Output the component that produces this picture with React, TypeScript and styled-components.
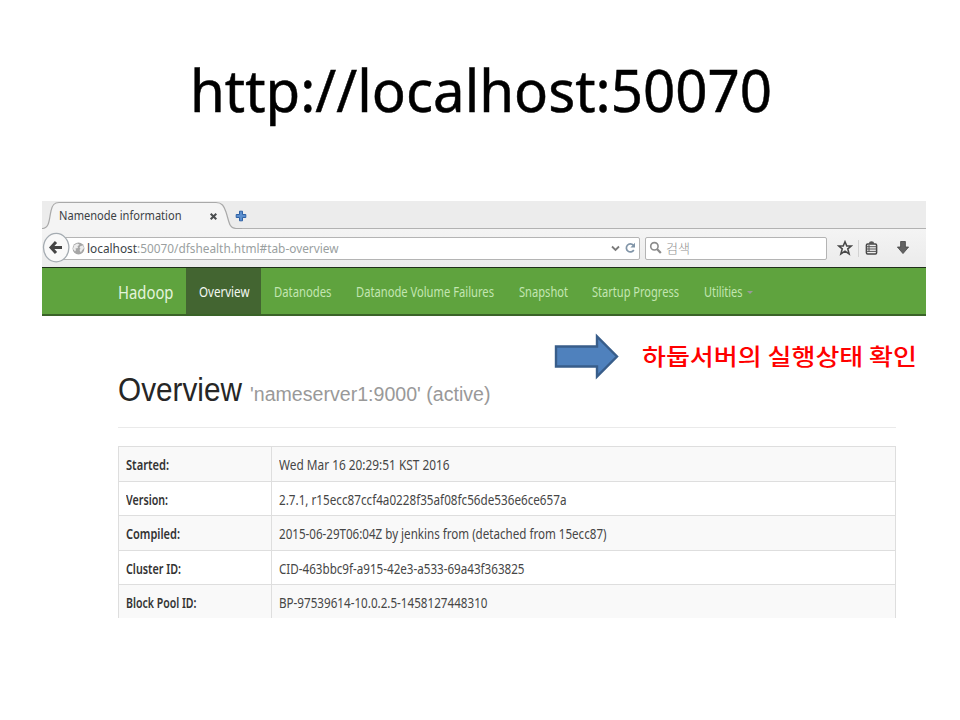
import React, { useLayoutEffect, useRef, useState } from "react";
import styled, { createGlobalStyle } from "styled-components";

const GlobalStyle = createGlobalStyle`
  * { box-sizing: border-box; }
  body { margin: 0; background: #fff; overflow: hidden; }
`;

const humanist = `"Noto Sans", "Open Sans", "Noto Sans CJK KR", sans-serif`;

/* Text condensed or widened to an exact width */
const FitBox = styled.span<{ $w: number }>`
  display: block;
  flex: none;
  width: ${(p) => p.$w}px;
  white-space: nowrap;
`;
const FitInner = styled.span`
  display: inline-block;
  white-space: pre;
  transform-origin: 0 50%;
`;
function Fit({ w, children }: { w: number; children: React.ReactNode }) {
  const ref = useRef<HTMLSpanElement>(null);
  const [scale, setScale] = useState(1);
  useLayoutEffect(() => {
    if (ref.current) {
      const natural = ref.current.getBoundingClientRect().width / scale;
      if (natural > 0) setScale(w / natural);
    }
  }, [w]);
  return (
    <FitBox $w={w}>
      <FitInner ref={ref} style={{ transform: `scaleX(${scale})` }}>
        {children}
      </FitInner>
    </FitBox>
  );
}

const Slide = styled.main`
  position: relative;
  width: 960px;
  height: 720px;
  overflow: hidden;
  background: #fff;
  font-family: ${humanist};
`;
const Title = styled.h1`
  display: flex;
  margin: 0;
  height: 201px;
  padding: 48px 0 0 190px;
  font-size: 59px;
  font-weight: 400;
  line-height: 82px;
  color: #000;
  -webkit-text-stroke: 0.5px #000;
`;
const Browser = styled.section`
  width: 884px;
  height: 417px;
  margin-left: 42px;
  overflow: hidden;
  background: #fff;
`;
const TabStrip = styled.div`
  display: flex;
  position: relative;
  height: 28px;
  background: #ececec;
  border-bottom: 1px solid #b2b2b2;
`;
const TabShape = styled.svg`
  position: absolute;
  left: 0;
  top: 0;
`;
const Tab = styled.div`
  display: flex;
  position: relative;
  align-items: center;
  justify-content: space-between;
  width: 159px;
  height: 29px;
  margin-left: 17px;
  padding-top: 1px;
  font-size: 12.3px;
  line-height: 28px;
  color: #3c4144;
`;
const NewTab = styled.div`
  display: flex;
  position: relative;
  align-items: center;
  height: 29px;
  margin-left: 17px;
`;
const Toolbar = styled.div`
  display: flex;
  align-items: center;
  position: relative;
  height: 38px;
  background: linear-gradient(#f4f4f4, #ebebeb);
`;
const BackSvg = styled.svg`
  position: absolute;
  left: 0;
  top: 3px;
`;
const Field = styled.div<{ $w: number; $ml: number; $pl: number }>`
  display: flex;
  flex: none;
  align-items: center;
  width: ${(p) => p.$w}px;
  height: 23px;
  margin-left: ${(p) => p.$ml}px;
  padding-left: ${(p) => p.$pl}px;
  padding-right: 3px;
  background: #fff;
  border: 1px solid #b4b4b4;
  border-radius: 2px;
  font-size: 12.3px;
  color: #9a9f9f;
`;
const Host = styled.span`
  color: #3c4347;
`;
const Address = styled.div`
  flex: 1;
  margin-left: 2px;
  padding-top: 1px;
`;
const FieldIcons = styled.div`
  display: flex;
  align-items: center;
  gap: 5px;
`;
const Hint = styled.div`
  margin-left: 4px;
  font-family: "Noto Sans CJK KR", sans-serif;
  font-weight: 300;
  font-size: 13px;
  line-height: 20px;
  color: #8f8f8f;
`;
const Tools = styled.div`
  display: flex;
  align-items: center;
  margin-left: 10px;
`;
const Separator = styled.i`
  width: 1px;
  height: 17px;
  margin: 0 6px 0 5px;
  background: #d2d2d2;
`;
const Navbar = styled.nav`
  display: flex;
  height: 49px;
  padding-left: 76px;
  background: #5fa33e;
  border-top: 1px solid #1f2f1a;
  border-bottom: 2px solid #3a6328;
  line-height: 48px;
`;
const Brand = styled.div`
  display: flex;
  width: 68px;
  font-size: 17.5px;
  color: #e4f3dc;
`;
const NavItem = styled.a<{ $active?: boolean }>`
  display: flex;
  align-items: center;
  padding: 2px 11.8px 0 12.8px;
  font-size: 13.7px;
  background: ${(p) => (p.$active ? "#436531" : "transparent")};
  color: ${(p) => (p.$active ? "#f4f8f2" : "#c3e6b2")};
`;
const Caret = styled.i`
  margin-left: 5px;
  border: 3px solid transparent;
  border-top-color: #999;
  border-bottom: 0;
`;
const Content = styled.div`
  width: 778px;
  margin-left: 76px;
`;
const PageHeader = styled.header`
  display: flex;
  align-items: baseline;
  height: 112px;
  padding-top: 54px;
  border-bottom: 1px solid #eaeaea;
  font-family: "Liberation Sans", Arial, sans-serif;
  line-height: 40px;
`;
const Heading = styled.div`
  font-size: 33.5px;
  color: #262626;
`;
const SubHeading = styled.div`
  margin-left: 8px;
  font-size: 20px;
  color: #999;
`;
const Table = styled.div`
  margin-top: 18.4px;
  border: 1px solid #dedede;
  border-bottom: 0;
  border-top: 0;
`;
const Row = styled.div<{ $odd: boolean }>`
  display: grid;
  grid-template-columns: 153px 1fr;
  height: 34.5px;
  border-top: 1px solid #dedede;
  background: ${(p) => (p.$odd ? "#f9f9f9" : "#fff")};
  font-size: 14px;
  line-height: 35px;
`;
const Label = styled.div`
  padding-left: 6.7px;
  border-right: 1px solid #dedede;
  font-weight: 600;
  color: #333;
`;
const Value = styled.div`
  padding-left: 6.5px;
  color: #464646;
`;
const Callout = styled.aside`
  position: absolute;
  left: 554px;
  top: 333px;
  display: flex;
  align-items: center;
  height: 47px;
  font-family: "Noto Sans CJK KR", sans-serif;
  font-size: 23px;
  font-weight: 500;
  line-height: 45px;
  color: #f00;
`;
const CalloutText = styled.div`
  margin-left: 23px;
  margin-top: -2px;
`;

const links = [
  { text: "Overview", w: 50.5, active: true },
  { text: "Datanodes", w: 57.5 },
  { text: "Datanode Volume Failures", w: 138 },
  { text: "Snapshot", w: 49 },
  { text: "Startup Progress", w: 87 },
  { text: "Utilities", w: 38.5, menu: true },
];

const rows: [string, number, string, number][] = [
  ["Started:", 43, "Wed Mar 16 20:29:51 KST 2016", 170.5],
  ["Version:", 42, "2.7.1, r15ecc87ccf4a0228f35af08fc56de536e6ce657a", 287.5],
  ["Compiled:", 54, "2015-06-29T06:04Z by jenkins from (detached from 15ecc87)", 327.5],
  ["Cluster ID:", 55, "CID-463bbc9f-a915-42e3-a533-69a43f363825", 245.5],
  ["Block Pool ID:", 70.5, "BP-97539614-10.0.2.5-1458127448310", 208.5],
];

export default function App() {
  return (
    <Slide>
      <GlobalStyle />
      <Title>
        <Fit w={582}>http://localhost:50070</Fit>
      </Title>
      <Browser>
        <TabStrip>
          <TabShape width="200" height="29" viewBox="0 0 200 29">
            <path d="M0 28C8 27 7 18 9 10C10 4 12 1.5 17 1.5H174C180 1.5 182 5 184 11C187 20 187 27.5 194 27.5V29H0Z" fill="#f4f4f4" />
            <path d="M0 27.5C8 27 7 18 9 10C10 4 12 1.5 17 1.5H174C180 1.5 182 5 184 11C187 20 187 27.5 194 27.5H200" fill="none" stroke="#a9a9a9" strokeWidth="1.2" />
          </TabShape>
          <Tab>
            <Fit w={122.5}>Namenode information</Fit>
            <svg width="9" height="9" viewBox="0 0 9 9">
              <path d="M1.7 1.7L7.3 7.3M7.3 1.7L1.7 7.3" stroke="#4a4d4f" strokeWidth="2" />
            </svg>
          </Tab>
          <NewTab>
            <svg width="12" height="12" viewBox="0 0 12 12">
              <path d="M4.5 1.2H7.5V4.5H10.8V7.5H7.5V10.8H4.5V7.5H1.2V4.5H4.5Z" fill="#5c8fce" stroke="#2f62a5" strokeWidth="1" strokeLinejoin="round" />
            </svg>
          </NewTab>
        </TabStrip>
        <Toolbar>
          <Field $w={586} $ml={12} $pl={17}>
            <svg width="13" height="13" viewBox="0 0 13 13">
              <circle cx="6.5" cy="6.5" r="5.9" fill="#a6a6a6" />
              <path d="M2 3.5L5 1.5L7.5 2.5L5.5 4.5L6 6L3.5 6.5L4 8L3 9.5L1 7ZM8.5 4L11 3.6L12 6L10 8.5L8.8 10.5L7.5 8L8.5 6.8L7.5 5.5Z" fill="#ececec" />
            </svg>
            <Address>
              <Fit w={251.5}>
                <Host>localhost</Host>:50070/dfshealth.html#tab-overview
              </Fit>
            </Address>
            <FieldIcons>
              <svg width="9" height="7" viewBox="0 0 9 7">
                <path d="M1 1.5L4.5 5L8 1.5" fill="none" stroke="#7b7b7b" strokeWidth="1.8" />
              </svg>
              <svg width="11" height="12" viewBox="0 0 11 12">
                <path d="M8.8 8A4 4 0 1 1 8.3 3.2" fill="none" stroke="#8195a8" strokeWidth="1.7" />
                <path d="M10 0.8V5.6H5.4Z" fill="#8195a8" />
              </svg>
            </FieldIcons>
          </Field>
          <Field $w={182} $ml={5} $pl={3}>
            <svg width="13" height="14" viewBox="0 0 13 14">
              <circle cx="5.4" cy="5.3" r="3.7" fill="none" stroke="#8b8b8b" strokeWidth="1.6" />
              <path d="M8 8L11.8 12" stroke="#8b8b8b" strokeWidth="2.2" />
            </svg>
            <Hint>
              <Fit w={24}>검색</Fit>
            </Hint>
          </Field>
          <Tools>
            <svg width="16" height="16" viewBox="0 0 16 16">
              <path d="M8 1.8L9.8 6H14.2L10.8 8.9L12.1 13.9L8 11.1L3.9 13.9L5.2 8.9L1.8 6H6.2Z" fill="none" stroke="#484848" strokeWidth="1.6" />
            </svg>
            <Separator />
            <svg width="13" height="16" viewBox="0 0 13 16">
              <rect x="1.4" y="4" width="10.2" height="10" rx="1.2" fill="none" stroke="#484848" strokeWidth="1.5" />
              <path d="M4 4V2.7Q4 1.2 6.5 1.2T9 2.7V4Z" fill="#555" />
              <path d="M1.5 6.7H11.5M1.5 9H11.5M1.5 11.4H11.5M4 5V12" stroke="#555" strokeWidth="1" />
            </svg>
            <svg width="50" height="16" viewBox="0 0 50 16">
              <path d="M22.6 1.5H27.4V7H30.6L25 13.6L19.4 7H22.6Z" fill="#626262" stroke="#444" strokeWidth="0.8" />
            </svg>
          </Tools>
          <BackSvg width="28" height="31" viewBox="0 0 28 31">
            <ellipse cx="14.2" cy="15.6" rx="12.7" ry="14.2" fill="#f9f9f9" stroke="#a5acb2" strokeWidth="1.3" />
            <path d="M14 9.9L9 15.5L14 21.1M9.5 15.5H20" fill="none" stroke="#454545" strokeWidth="3" />
          </BackSvg>
        </Toolbar>
        <Navbar>
          <Brand>
            <Fit w={55.5}>Hadoop</Fit>
          </Brand>
          {links.map((l) => (
            <NavItem key={l.text} $active={l.active}>
              <Fit w={l.w}>{l.text}</Fit>
              {l.menu && <Caret />}
            </NavItem>
          ))}
        </Navbar>
        <Content>
          <PageHeader>
            <Heading>
              <Fit w={124}>Overview</Fit>
            </Heading>
            <SubHeading>
              <Fit w={240.5}>'nameserver1:9000' (active)</Fit>
            </SubHeading>
          </PageHeader>
          <Table>
            {rows.map(([label, lw, value, vw], i) => (
              <Row key={label} $odd={i % 2 === 0}>
                <Label>
                  <Fit w={lw}>{label}</Fit>
                </Label>
                <Value>
                  <Fit w={vw}>{value}</Fit>
                </Value>
              </Row>
            ))}
          </Table>
        </Content>
      </Browser>
      <Callout>
        <svg width="65" height="47" viewBox="0 0 65 47">
          <path d="M2 13.5H43V3.5L63 23.5L43 43.5V33.5H2Z" fill="#4f81bd" stroke="#385d8a" strokeWidth="2.4" />
        </svg>
        <CalloutText>
          <Fit w={275}>하둡서버의 실행상태 확인</Fit>
        </CalloutText>
      </Callout>
    </Slide>
  );
}
